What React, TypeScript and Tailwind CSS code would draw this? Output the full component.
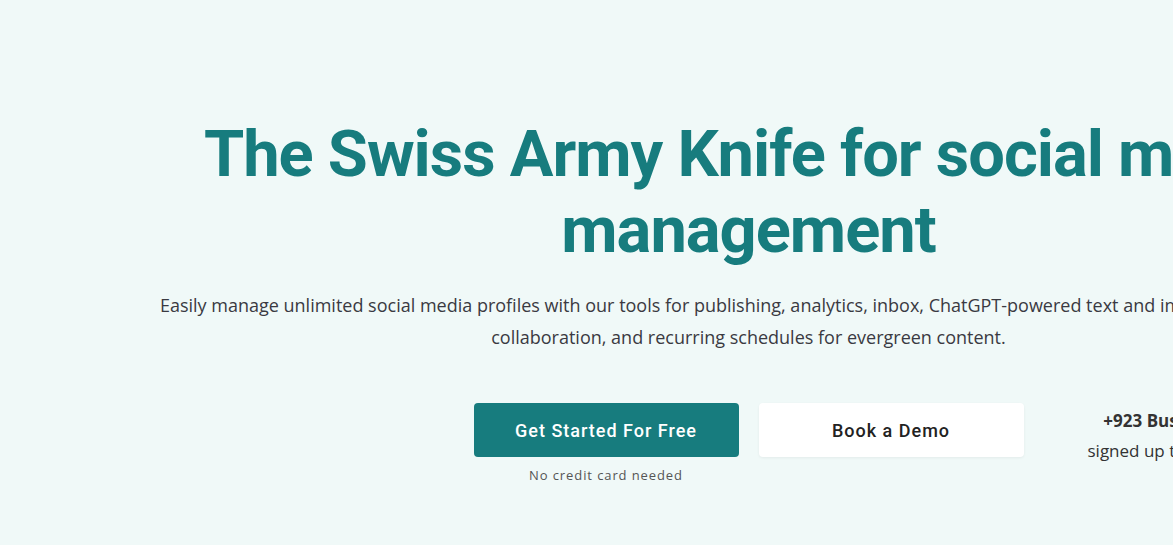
export default function App() {
  return (
    <div className="min-h-screen w-[1497px] bg-[#f0f9f8] overflow-hidden">
      <section className="pt-[116px] pb-16 flex flex-col items-center">
        <h1 className="text-center font-['Roboto',sans-serif] font-bold text-[65px] leading-[76px] tracking-[-1px] text-[#177c7e] max-w-[1200px]">
          The Swiss Army Knife for social media management
        </h1>
        <p className="mt-[21px] text-center font-['Open_Sans',sans-serif] text-[18px] leading-[32px] text-[#3a3a42] max-w-[1200px]">
          Easily manage unlimited social media profiles with our tools for publishing, analytics, inbox, ChatGPT-powered text and image creation, team collaboration, and recurring schedules for evergreen content.
        </p>
        <div className="mt-[50px] w-full grid grid-cols-[1fr_auto_1fr] items-start">
          <div />
          <div className="flex gap-5">
            <div className="flex flex-col items-center">
              <button className="w-[265px] h-[54px] rounded bg-[#177c7e] text-white font-['Roboto',sans-serif] font-medium text-[18px] tracking-[1px]">
                Get Started For Free
              </button>
              <span className="mt-[9px] font-['Open_Sans',sans-serif] text-[13px] tracking-[0.9px] text-[#555]">
                No credit card needed
              </span>
            </div>
            <button className="w-[265px] h-[54px] rounded bg-white shadow-[0_1px_3px_rgba(0,0,0,0.06)] text-[#222] font-['Roboto',sans-serif] font-medium text-[18px] tracking-[1px]">
              Book a Demo
            </button>
          </div>
          <div className="pl-16 pt-[2px] font-['Open_Sans',sans-serif] text-[17px] text-[#333]">
            <div className="inline-flex flex-col items-center">
              <span className="font-bold leading-[32px]">+923 Businesses</span>
              <span className="leading-[28px]">signed up this month</span>
            </div>
          </div>
        </div>
      </section>
    </div>
  );
}
